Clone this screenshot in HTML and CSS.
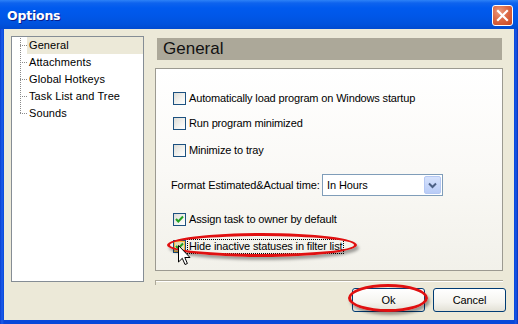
FILE: index.html
```html
<!DOCTYPE html>
<html>
<head>
<meta charset="utf-8">
<link rel="stylesheet" href="styles.css">
</head>
<body>
<div class="window">
  <div class="titlebar">
    <span class="title">Options</span>
    <div class="close">
      <svg width="13" height="13" viewBox="0 0 13 13"><path d="M2 2 L11 11 M11 2 L2 11" stroke="#fff" stroke-width="2.2" stroke-linecap="square"/></svg>
    </div>
  </div>
  <div class="client">
    <div class="main">
      <div class="tree">
        <div class="vline"></div>
        <ul>
          <li class="sel"><span class="tick"></span><span class="lbl">General</span></li>
          <li><span class="tick"></span><span class="lbl">Attachments</span></li>
          <li><span class="tick"></span><span class="lbl">Global Hotkeys</span></li>
          <li><span class="tick"></span><span class="lbl">Task List and Tree</span></li>
          <li><span class="tick"></span><span class="lbl">Sounds</span></li>
        </ul>
      </div>
      <div class="right">
        <div class="header">General</div>
        <div class="panel">
          <div class="row r1"><span class="cb"></span><span class="txt">Automatically load program on Windows startup</span></div>
          <div class="row r2"><span class="cb"></span><span class="txt">Run program minimized</span></div>
          <div class="row r3"><span class="cb"></span><span class="txt">Minimize to tray</span></div>
          <div class="format">
            <span class="flabel">Format Estimated&amp;Actual time:</span>
            <div class="combo">
              <span class="cval">In Hours</span>
              <span class="drop"><svg width="9" height="7" viewBox="0 0 9 7"><path d="M1 1.5 L4.5 5 L8 1.5" fill="none" stroke="#4D6185" stroke-width="2"/></svg></span>
            </div>
          </div>
          <div class="row r4"><span class="cb checked"><svg width="11" height="11" viewBox="0 0 11 11"><path d="M2 5 L4.3 7.5 L9 2.5" fill="none" stroke="#21A121" stroke-width="2"/></svg></span><span class="txt">Assign task to owner by default</span></div>
          <div class="row r5"><span class="cb checked hot"><svg width="11" height="11" viewBox="0 0 11 11"><path d="M2 5 L4.3 7.5 L9 2.5" fill="none" stroke="#21A121" stroke-width="2"/></svg></span><span class="txt focus">Hide inactive statuses in filter list</span></div>
        </div>
        <div class="sep"></div>
      </div>
    </div>
    <div class="buttons">
      <div class="btn">Ok</div>
      <div class="btn">Cancel</div>
    </div>
  </div>
  <div class="ring ring-hide"></div>
  <div class="ring ring-ok"></div>
  <svg class="cursor" width="14" height="23" viewBox="0 0 14 23">
    <path d="M0.5 0.5 L0.5 17 L4.3 13.3 L7 19.5 L9.4 18.5 L6.8 12.5 L12 12.5 Z" fill="#fff" stroke="#000" stroke-width="1" stroke-linejoin="miter"/>
  </svg>
</div>
</body>
</html>
```

FILE: styles.css
```css
* { box-sizing: border-box; }
html, body { margin: 0; padding: 0; }
body { width: 518px; height: 324px; overflow: hidden; background: #0A3CCB; }

.window {
  position: relative;
  width: 518px;
  height: 324px;
  display: flex;
  flex-direction: column;
  background: linear-gradient(to right, #0B3ECF 0, #1A5CEB 2px, #0847D9 4px, #0847D9 514px, #1956E6 516px, #0831B8 518px);
  font-family: "Liberation Sans", Arial, sans-serif;
  font-size: 11px;
  color: #000;
}

.titlebar {
  height: 29px;
  flex: none;
  display: flex;
  align-items: center;
  justify-content: space-between;
  padding: 0 5px 0 7px;
  background: linear-gradient(to bottom, #2D82F7 0, #0E63EE 3px, #005AEE 8px, #0057E8 16px, #0052DD 24px, #004AD0 29px);
}
.title {
  color: #fff;
  font-family: "DejaVu Sans", sans-serif;
  font-weight: bold;
  font-size: 12.5px;
  letter-spacing: -0.2px;
  text-shadow: 1px 1px 0 #0A1E8C;
  padding-top: 1px;
}
.close {
  width: 21px;
  height: 21px;
  margin-top: 1px;
  border: 1px solid #fff;
  border-radius: 3px;
  background: radial-gradient(circle at 35% 30%, #EC9B7E 0, #DC6A46 45%, #C9441F 100%);
  display: flex;
  align-items: center;
  justify-content: center;
}

.client {
  flex: 1;
  margin: 0 4px 4px 4px;
  background: #ECE9D8;
  padding: 7px 8px 0 7px;
  display: flex;
  flex-direction: column;
}

.main {
  display: flex;
  gap: 11px;
  height: 246px;
  margin-right: 3px;
}

.tree {
  position: relative;
  width: 133px;
  height: 246px;
  flex: none;
  background: #fff;
  border: 1px solid #858D95;
}
.tree ul { list-style: none; margin: 0; padding: 0; }
.tree li {
  display: flex;
  align-items: center;
  height: 17px;
  padding-left: 8px;
}
.vline {
  position: absolute;
  left: 8px;
  top: 1px;
  height: 75px;
  border-left: 1px dotted #8A8A8A;
}
.tick {
  width: 7px;
  border-top: 1px dotted #8A8A8A;
  flex: none;
}
.lbl {
  flex: 1;
  height: 17px;
  line-height: 17px;
  padding-left: 2px;
  letter-spacing: 0.1px;
}
.sel .lbl { background: #ECE9D8; }

.right {
  flex: 1;
  display: flex;
  flex-direction: column;
}
.header {
  height: 22px;
  margin: 2px 1px 0 2px;
  background: #ACA899;
  font-size: 17px;
  line-height: 22px;
  padding-left: 6px;
  color: #111;
}
.panel {
  position: relative;
  margin-top: 8px;
  height: 204px;
  border: 1px solid #9C9A91;
  background: linear-gradient(to bottom, #FFFFFF 0%, #FAF9F6 50%, #F2F1EA 100%);
  padding: 23px 0 0 17px;
}
.row {
  display: flex;
  align-items: center;
  height: 13px;
}
.r2 { margin-top: 12px; }
.r3 { margin-top: 14px; }
.r4 { margin-top: 17px; }
.r5 { margin-top: 14px; }
.cb {
  width: 13px;
  height: 13px;
  flex: none;
  border: 1px solid #1C5180;
  background: linear-gradient(135deg, #DCDCD7 0%, #F3F3F0 60%, #FFFFFF 100%);
  display: flex;
  align-items: center;
  justify-content: center;
}
.cb.hot { box-shadow: inset 0 0 0 1px #F8B636; background: linear-gradient(135deg, #D8D6A8 0%, #EDEBD0 100%); }
.txt { margin-left: 3px; line-height: 13px; letter-spacing: -0.15px; }
.focus { outline: 1px dotted #000; outline-offset: 0; padding: 0 1px; margin-left: 2px; }

.format {
  display: flex;
  align-items: center;
  margin-top: 17px;
  margin-left: -2px;
  height: 22px;
}
.flabel { width: 151px; letter-spacing: -0.1px; }
.combo {
  width: 121px;
  height: 22px;
  border: 1px solid #7F9DB9;
  background: #fff;
  display: flex;
  align-items: center;
  justify-content: space-between;
  padding: 1px;
}
.cval { padding-left: 3px; letter-spacing: -0.1px; }
.drop {
  width: 17px;
  height: 18px;
  border-radius: 2px;
  background: linear-gradient(to bottom, #D6E2FC 0%, #B9CCF7 100%);
  border: 1px solid #B5C8F3;
  display: flex;
  align-items: center;
  justify-content: center;
}

.sep {
  margin-top: 9px;
  height: 2px;
  border-top: 1px solid #ACA899;
  border-bottom: 1px solid #fff;
  position: relative;
}
.sep::before {
  content: "";
  position: absolute;
  left: 0;
  top: 0;
  width: 1px;
  height: 4px;
  background: #ACA899;
}

.buttons {
  display: flex;
  justify-content: flex-end;
  gap: 8px;
  margin-top: 6px;
}
.btn {
  width: 73px;
  height: 24px;
  border: 1px solid #003C74;
  border-radius: 3px;
  background: linear-gradient(to bottom, #FFFFFF 0%, #F5F4EF 60%, #E3E1D6 100%);
  display: flex;
  align-items: center;
  justify-content: center;
  letter-spacing: -0.1px;
}

.ring {
  position: absolute;
  border: 3px solid #E01010;
  border-radius: 50%;
  box-shadow: 2px 3px 3px rgba(0,0,0,0.35);
}
.ring-hide { left: 167px; top: 233px; width: 190px; height: 24px; }
.ring-ok { left: 348px; top: 284px; width: 80px; height: 28px; }
.cursor { position: absolute; left: 178px; top: 245px; }
```
